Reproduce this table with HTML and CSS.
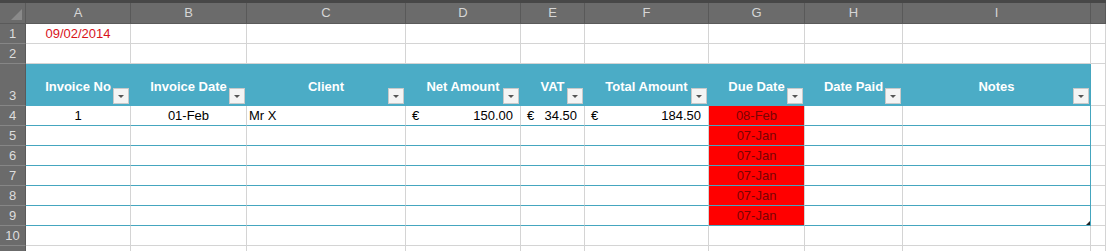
FILE: index.html
```html
<!DOCTYPE html>
<html>
<head>
<meta charset="utf-8">
<link rel="stylesheet" href="styles.css">
</head>
<body>
<div class="sheet">
  <div class="topbar"></div>
  <div class="row colhead">
    <div class="corner"><span class="corner-tri"></span></div>
    <div class="ch">A</div><div class="ch">B</div><div class="ch">C</div><div class="ch">D</div><div class="ch">E</div><div class="ch">F</div><div class="ch">G</div><div class="ch">H</div><div class="ch">I</div><div class="ch"></div>
  </div>

  <div class="row">
    <div class="rh">1</div>
    <div class="c center red-text">09/02/2014</div><div class="c"></div><div class="c"></div><div class="c"></div><div class="c"></div><div class="c"></div><div class="c"></div><div class="c"></div><div class="c"></div><div class="c"></div>
  </div>
  <div class="row">
    <div class="rh">2</div>
    <div class="c"></div><div class="c"></div><div class="c"></div><div class="c"></div><div class="c"></div><div class="c"></div><div class="c"></div><div class="c"></div><div class="c"></div><div class="c"></div>
  </div>

  <div class="row tall">
    <div class="rh">3</div>
    <div class="th">Invoice No<span class="filter"></span></div>
    <div class="th">Invoice Date<span class="filter"></span></div>
    <div class="th">Client<span class="filter"></span></div>
    <div class="th">Net Amount<span class="filter"></span></div>
    <div class="th">VAT<span class="filter"></span></div>
    <div class="th">Total Amount<span class="filter"></span></div>
    <div class="th">Due Date<span class="filter"></span></div>
    <div class="th">Date Paid<span class="filter"></span></div>
    <div class="th last">Notes<span class="filter"></span></div>
    <div class="c"></div>
  </div>

  <div class="row">
    <div class="rh">4</div>
    <div class="c tb center">1</div>
    <div class="c tb center">01-Feb</div>
    <div class="c tb left">Mr X</div>
    <div class="c tb money"><span>€</span><span>150.00</span></div>
    <div class="c tb money"><span>€</span><span>34.50</span></div>
    <div class="c tb money"><span>€</span><span>184.50</span></div>
    <div class="c tb due">08-Feb</div>
    <div class="c tb"></div>
    <div class="c tb last"></div>
    <div class="c"></div>
  </div>
  <div class="row">
    <div class="rh">5</div>
    <div class="c tb"></div><div class="c tb"></div><div class="c tb"></div><div class="c tb"></div><div class="c tb"></div><div class="c tb"></div>
    <div class="c tb due">07-Jan</div><div class="c tb"></div><div class="c tb last"></div><div class="c"></div>
  </div>
  <div class="row">
    <div class="rh">6</div>
    <div class="c tb"></div><div class="c tb"></div><div class="c tb"></div><div class="c tb"></div><div class="c tb"></div><div class="c tb"></div>
    <div class="c tb due">07-Jan</div><div class="c tb"></div><div class="c tb last"></div><div class="c"></div>
  </div>
  <div class="row">
    <div class="rh">7</div>
    <div class="c tb"></div><div class="c tb"></div><div class="c tb"></div><div class="c tb"></div><div class="c tb"></div><div class="c tb"></div>
    <div class="c tb due">07-Jan</div><div class="c tb"></div><div class="c tb last"></div><div class="c"></div>
  </div>
  <div class="row">
    <div class="rh">8</div>
    <div class="c tb"></div><div class="c tb"></div><div class="c tb"></div><div class="c tb"></div><div class="c tb"></div><div class="c tb"></div>
    <div class="c tb due">07-Jan</div><div class="c tb"></div><div class="c tb last"></div><div class="c"></div>
  </div>
  <div class="row">
    <div class="rh">9</div>
    <div class="c tb"></div><div class="c tb"></div><div class="c tb"></div><div class="c tb"></div><div class="c tb"></div><div class="c tb"></div>
    <div class="c tb due">07-Jan</div><div class="c tb"></div><div class="c tb last"><span class="handle"></span></div><div class="c"></div>
  </div>
  <div class="row">
    <div class="rh">10</div>
    <div class="c"></div><div class="c"></div><div class="c"></div><div class="c"></div><div class="c"></div><div class="c"></div><div class="c"></div><div class="c"></div><div class="c"></div><div class="c"></div>
  </div>
  <div class="row short">
    <div class="rh"></div>
    <div class="c"></div><div class="c"></div><div class="c"></div><div class="c"></div><div class="c"></div><div class="c"></div><div class="c"></div><div class="c"></div><div class="c"></div><div class="c"></div>
  </div>
</div>
</body>
</html>
```

FILE: styles.css
```css
* { box-sizing: border-box; }
html, body { margin: 0; padding: 0; background: #ffffff; }
body {
  font-family: "Liberation Sans", Arial, sans-serif;
  font-size: 13px;
  color: #000;
  overflow: hidden;
  width: 1106px;
  height: 251px;
}
.sheet { width: 1106px; }
.topbar { height: 3px; background: #474747; }

.row {
  display: grid;
  grid-template-columns: 26px 105px 116px 159px 115px 64px 124px 96px 98px 188px 1fr;
  height: 20px;
}
.row.tall { height: 42px; }
.row.short { height: 6px; }
.colhead { height: 21px; background: #6b6b6b; }

.corner {
  position: relative;
  background: #6b6b6b;
  border-right: 1px solid #5a5a5a;
  border-bottom: 1px solid #5a5a5a;
}
.corner-tri {
  position: absolute;
  right: 3px;
  bottom: 3px;
  width: 0;
  height: 0;
  border-left: 11px solid transparent;
  border-bottom: 11px solid #8a8a8a;
}
.ch {
  background: #6b6b6b;
  color: #d6d6d6;
  text-align: center;
  line-height: 20px;
  border-right: 1px solid #595959;
  border-bottom: 1px solid #5a5a5a;
}

.rh {
  background: #6b6b6b;
  color: #dddddd;
  border-right: 1px solid #5a5a5a;
  border-bottom: 1px solid #868686;
  display: flex;
  align-items: flex-end;
  justify-content: center;
  line-height: 19px;
}

.c {
  border-right: 1px solid #d4d4d4;
  border-bottom: 1px solid #d4d4d4;
  line-height: 19px;
  white-space: nowrap;
  overflow: hidden;
}
.center { text-align: center; }
.left { padding-left: 2px; }
.red-text { color: #d8131b; }

.th {
  position: relative;
  background: #4bacc6;
  color: #ffffff;
  font-weight: bold;
  text-align: center;
  line-height: 18px;
  padding-top: 13px;
  border-top: 1px solid #4bacc6;
  border-right: 1px solid #4bacc6;
  border-bottom: 1px solid #4bacc6;
  white-space: nowrap;
}
.th.last { border-right-color: #45a6bf; }

.filter {
  position: absolute;
  right: 1px;
  bottom: 1px;
  width: 16px;
  height: 16px;
  background: #f4f4f4;
  border: 1px solid #c9c9c9;
}
.filter::after {
  content: "";
  position: absolute;
  left: 4px;
  top: 6px;
  width: 0;
  height: 0;
  border-left: 3px solid transparent;
  border-right: 3px solid transparent;
  border-top: 3px solid #555555;
}

.tb { border-bottom: 1px solid #45a6bf; }
.tb.last { border-right: 1px solid #45a6bf; position: relative; }

.money {
  display: flex;
  justify-content: space-between;
  padding: 0 7px 0 6px;
}

.due {
  background: #ff0000;
  color: #7a0404;
  text-align: center;
}

.handle {
  position: absolute;
  right: 0;
  bottom: 0;
  width: 0;
  height: 0;
  border-left: 4px solid transparent;
  border-bottom: 4px solid #222222;
}
```
